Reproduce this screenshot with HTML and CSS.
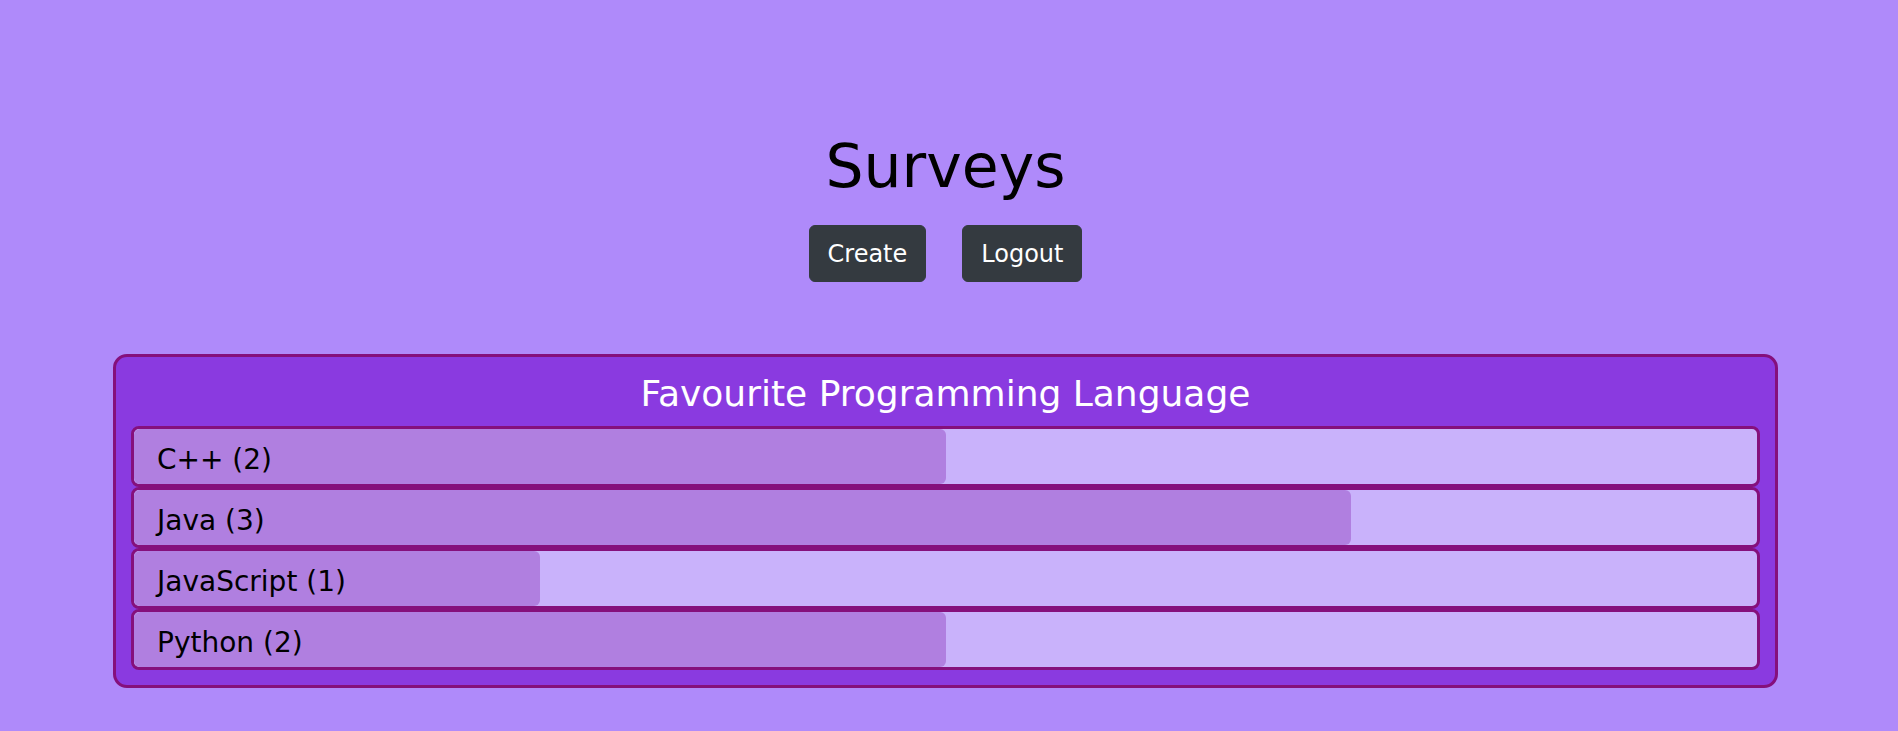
FILE: index.html
```html
<!DOCTYPE html>
<html lang="en">
<head>
<meta charset="utf-8">
<title>Surveys</title>
<link rel="stylesheet" href="styles.css">
</head>
<body>
<main class="page">
  <h1 class="page-title">Surveys</h1>
  <div class="actions">
    <button class="btn">Create</button>
    <button class="btn">Logout</button>
  </div>
  <section class="survey">
    <h2 class="survey-title">Favourite Programming Language</h2>
    <div class="options">
      <div class="option"><div class="option-fill" style="width:50%"></div><span class="option-label">C++ (2)</span></div>
      <div class="option"><div class="option-fill" style="width:75%"></div><span class="option-label">Java (3)</span></div>
      <div class="option"><div class="option-fill" style="width:25%"></div><span class="option-label">JavaScript (1)</span></div>
      <div class="option"><div class="option-fill" style="width:50%"></div><span class="option-label">Python (2)</span></div>
    </div>
  </section>
</main>
</body>
</html>
```
FILE: styles.css
```css
html, body {
  margin: 0;
  padding: 0;
}
body {
  background: #af8afa;
  font-family: "DejaVu Sans", Verdana, sans-serif;
  color: #000;
  height: 731px;
  overflow: hidden;
}
.page {
  padding: 130px 120px 0 113px;
}
.page-title {
  margin: 0 0 23px;
  font-size: 60px;
  line-height: 72px;
  font-weight: 400;
  text-align: center;
}
.actions {
  display: flex;
  justify-content: center;
  gap: 36px;
}
.btn {
  font-family: inherit;
  font-size: 24px;
  line-height: 36px;
  color: #fff;
  background: #343a40;
  border: 1px solid #343a40;
  border-radius: 6px;
  padding: 9.5px 18px;
  cursor: pointer;
}
.survey {
  margin-top: 72px;
  background: #8a3ae0;
  border: 3px solid #85107c;
  border-radius: 14px;
  padding: 15px 15px 15px;
}
.survey-title {
  margin: 0 0 11px;
  font-size: 36px;
  line-height: 43px;
  font-weight: 400;
  color: #fff;
  text-align: center;
}
.options {
  display: flex;
  flex-direction: column;
}
.option {
  position: relative;
  height: 55px;
  background: #c9b2fb;
  border: 3px solid #85107c;
  border-radius: 8px;
  overflow: hidden;
}
.option-fill {
  position: absolute;
  top: 0;
  left: 0;
  bottom: 0;
  background: #b07fe0;
  border-radius: 6px;
}
.option-label {
  position: relative;
  display: block;
  padding: 6px 0 0 23px;
  font-size: 28px;
  line-height: 49px;
}
```
